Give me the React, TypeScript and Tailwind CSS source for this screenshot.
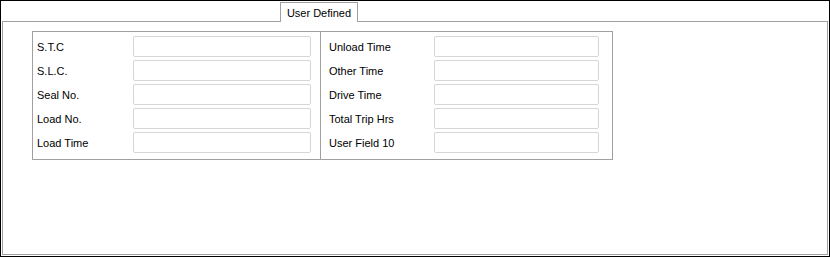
const left = ["S.T.C", "S.L.C.", "Seal No.", "Load No.", "Load Time"]
const right = ["Unload Time", "Other Time", "Drive Time", "Total Trip Hrs", "User Field 10"]

function Field({ label, labelW, inputW }: { label: string; labelW: string; inputW: string }) {
  return (
    <div className="flex items-center h-[20px]">
      <span className={`${labelW} shrink-0 text-[11px] leading-none pt-[2px] text-black`}>{label}</span>
      <div className={`${inputW} h-[21px] border border-[#d6d6d6] rounded-[2px] bg-white`} />
    </div>
  )
}

export default function App() {
  return (
    <div
      className="w-[830px] h-[257px] bg-white border border-black flex flex-col pr-px pb-px pl-px"
      style={{ fontFamily: '"Liberation Sans", Arial, sans-serif' }}
    >
      {/* tab strip */}
      <div className="flex h-[20px] shrink-0">
        <div className="w-[278px]" />
        <div className="w-[78px] h-[20px] border border-b-0 border-[#a0a0a0] bg-white flex items-center justify-center text-[11px] text-black pt-[2px] relative top-px">
          User Defined
        </div>
      </div>

      {/* tab panel */}
      <div className="flex-1 border border-[#a0a0a0] bg-white pl-[29px] pt-[9px]">
        <div className="w-[581px] h-[129px] border border-[#a0a0a0] flex">
          <div className="w-[288px] border-r border-[#a0a0a0] pl-[4px] pt-[4px] flex flex-col gap-[4px]">
            {left.map((l) => (
              <Field key={l} label={l} labelW="w-[96px]" inputW="w-[178px]" />
            ))}
          </div>
          <div className="flex-1 pl-[8px] pt-[4px] flex flex-col gap-[4px]">
            {right.map((l) => (
              <Field key={l} label={l} labelW="w-[105px]" inputW="w-[165px]" />
            ))}
          </div>
        </div>
      </div>
    </div>
  )
}
